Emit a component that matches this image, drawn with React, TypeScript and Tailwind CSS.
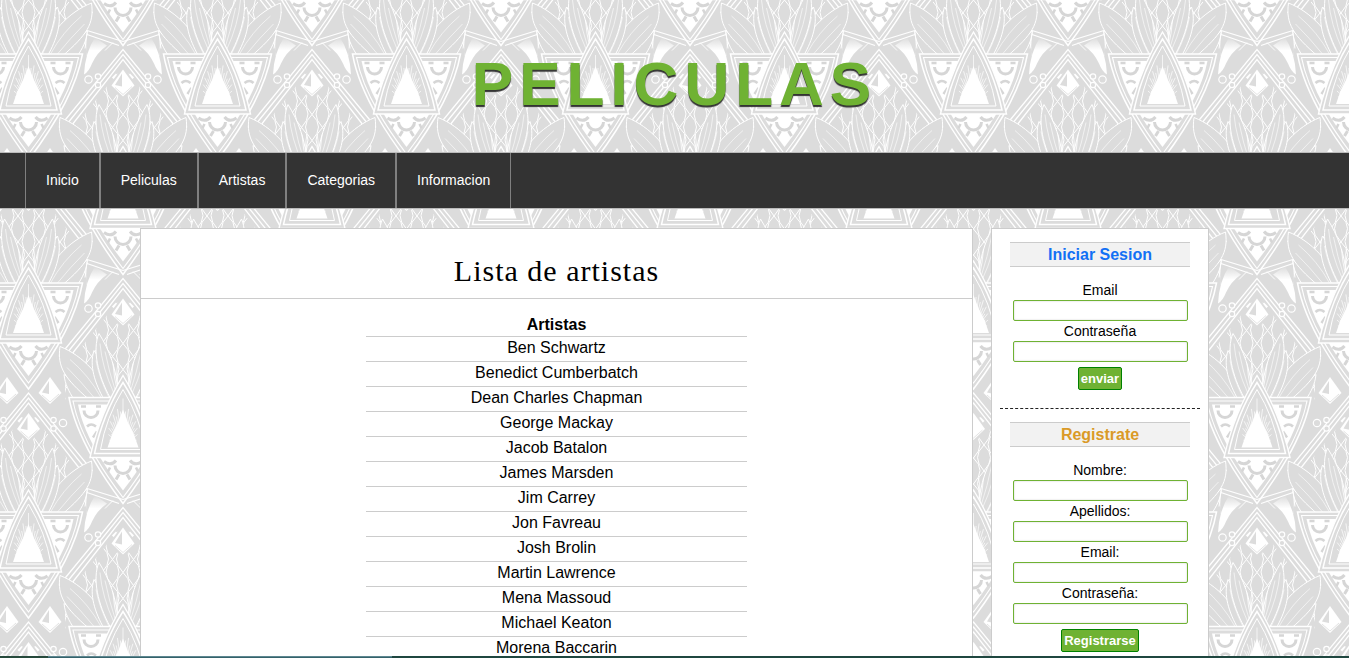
import type { ReactNode } from "react";

const SMALL_TRIANGLE = "M0 0Q23 38 33 82H-33Q-23 38 0 0Z";
const BIG_TRIANGLE = "M-54 22H54Q46 67 0 128Q-46 67 -54 22Z";

const scales = [-3, -2, -1, 0, 1, 2, 3].flatMap((i) =>
  [-2, -1, 0, 1, 2].flatMap((j) => [
    { x: i * 21, y: j * 26 - 18 },
    { x: i * 21 + 10.5, y: j * 26 - 5 },
  ])
);

const rays = Array.from({ length: 29 }, (_, i) => {
  const a = ((i - 14) * 6 * Math.PI) / 180;
  const off = Math.abs(i - 14);
  const len = off < 1 ? 48 : 42 - off * 1.8 - (i % 2) * 5;
  return { x: Math.sin(a) * len * 0.7, y: 71 - Math.cos(a) * len };
});

function Gem({ x, y }: { x: number; y: number }) {
  return (
    <g transform={`translate(${x} ${y})`}>
      <path d="M0 0L11.5 16L0 27L-11.5 16Z" fill="#fff" />
      <path d="M-1 4V17L-8 15.500Z" fill="#dcdcdc" />
      <path d="M-8 18L0 25L9 17" fill="none" stroke="#dcdcdc" strokeWidth="0.8" />
    </g>
  );
}

function Plumage() {
  return (
    <g fill="#dcdcdc" stroke="#fff" strokeWidth="1">
      <path d="M59 -1C58 9 54 16 49 24L30 24Q40 10 59 -1Z" />
      <path d="M63 -29C66 -8 58 3 34 24L14 24C20 2 40 -20 63 -29Z" />
      <path d="M53 -16Q34 0 22 22M56 -8Q42 6 29 22" fill="none" strokeWidth="0.6" />
      <path d="M29 -25C34 -10 28 8 19 24L11 22C13 2 20 -12 29 -25Z" />
      <path d="M24 -42C31 -26 25 0 13 22L5 18C6 -6 14 -26 24 -42Z" />
      <path d="M23 -32Q21 -8 9 18M18 -24Q14 -4 8 14M27 -15Q24 2 14 22" fill="none" strokeWidth="0.6" />
      <path d="M5 -12Q8 0 4 14M10 -12Q9 2 6 14" fill="none" strokeWidth="0.8" />
    </g>
  );
}

function Beads() {
  return (
    <g fill="#dcdcdc" stroke="#fff" strokeWidth="1.2">
      <circle cx="34.500" cy="-67" r="3.700" />
      <circle cx="25" cy="-70" r="2.700" />
      <circle cx="25" cy="-61.500" r="2.700" />
    </g>
  );
}

function Fang() {
  return (
    <g>
      <path d="M0 -105L36 -116M4 -101L36 -112" stroke="#fff" strokeWidth="1.300" />
      <path d="M10 -104L18 -96" fill="none" stroke="#fff" strokeWidth="0.900" />
      <path d="M16 -101L28 -109Q38 -94 39 -72Q34 -75 31 -83Q26 -94 16 -101Z" fill="url(#fang)" />
      <path d="M36 -114Q37 -104 38 -98" fill="none" stroke="#fff" strokeWidth="1" />
    </g>
  );
}

function Mirrored({ children }: { children: ReactNode }) {
  return (
    <>
      {children}
      <g transform="scale(-1 1)">{children}</g>
    </>
  );
}

function Motif({ x, y, fangs = false }: { x: number; y: number; fangs?: boolean }) {
  return (
    <g transform={`translate(${x} ${y})`}>
      <path d="M-64 -19L0 -97L64 -19" fill="#dcdcdc" stroke="#fff" strokeWidth="1.300" />
      <path d="M-62 -15L0 -92L62 -15M-60 -10L0 -87L60 -10" fill="none" stroke="#fff" strokeWidth="1.300" />
      <g clipPath="url(#roof)" fill="none" stroke="#fff" strokeWidth="1">
        {scales.map((s) => (
          <path
            key={`${s.x},${s.y}`}
            d={`M${s.x} ${s.y - 14}Q${s.x + 13} ${s.y - 2} ${s.x} ${s.y + 12}Q${s.x - 13} ${s.y - 2} ${s.x} ${s.y - 14}`}
          />
        ))}
      </g>
      <Mirrored>
        <Plumage />
        <Beads />
        {fangs && <Fang />}
        <path d="M6 -72L10 -68" stroke="#fff" strokeWidth="3" />
      </Mirrored>
      <path d="M0 -80L14 -61L0 -46L-14 -61Z" fill="#dcdcdc" />
      <Gem x={0} y={-77} />
      {!fangs && (
        <>
          <Gem x={21.5} y={-113} />
          <Gem x={-21.5} y={-113} />
        </>
      )}

      <path d={BIG_TRIANGLE} fill="#dcdcdc" stroke="#fff" strokeWidth="1.500" />
      <path d="M-50 25.500H50Q42 67 0 122Q-42 67 -50 25.500Z" fill="none" stroke="#fff" strokeWidth="1.200" />
      <path d="M-45 29H45Q38 66 0 115Q-38 66 -45 29Z" fill="#fff" />
      <g fill="none" stroke="#d6d6d6" strokeWidth="3">
        <path d="M-8 90A8 8 0 0 0 8 90" />
        <Mirrored>
          <path d="M7 85Q12 91 19 86M4 99L7 104M25 35A7 7 0 0 0 39 35" />
          <path d="M22 31H27M37 31H42M27 51Q32 47 36 51M26 56L30 62M13 92L15 96" strokeWidth="2.500" />
        </Mirrored>
      </g>

      <path d={SMALL_TRIANGLE} fill="#dcdcdc" stroke="#fff" strokeWidth="1.400" />
      <path d="M0 7Q20 38 28.500 78H-28.500Q-20 38 0 7Z" fill="none" stroke="#fff" strokeWidth="1.500" />
      <path d="M0 14Q17 42 22.500 74H-22.500Q-17 42 0 14Z" fill="#dcdcdc" stroke="#fff" strokeWidth="1" />
      <path d="M0 34L5 47L11 59L15.500 72H-15.500L-11 59L-5 47Z" fill="#fff" />
      {rays.map((r, i) => (
        <path key={i} d={`M0 71L${r.x} ${r.y}`} stroke="#fff" strokeWidth="0.700" />
      ))}
    </g>
  );
}

function Wallpaper() {
  return (
    <svg className="absolute inset-0 -z-10 h-full w-full" aria-hidden="true">
      <defs>
        <clipPath id="roof">
          <path d="M0 -80L58 -8V24H-58V-8Z" />
        </clipPath>
        <linearGradient id="fang" x1="0" y1="0" x2="0" y2="1">
          <stop offset="0" stopColor="#fff" stopOpacity="0" />
          <stop offset="0.35" stopColor="#fff" />
        </linearGradient>
        <pattern id="deco" width="189" height="229" patternUnits="userSpaceOnUse">
          <rect width="189" height="229" fill="#dcdcdc" />
          <Motif x={28.5} y={32} />
          <Motif x={217.5} y={32} />
          <Motif x={123} y={-82.5} fangs />
          <Motif x={123} y={146.5} fangs />
          <Motif x={28.5} y={261} />
          <Motif x={217.5} y={261} />
        </pattern>
      </defs>
      <rect width="100%" height="100%" fill="url(#deco)" />
    </svg>
  );
}

const menu = ["Inicio", "Peliculas", "Artistas", "Categorias", "Informacion"];

const artists = [
  "Ben Schwartz",
  "Benedict Cumberbatch",
  "Dean Charles Chapman",
  "George Mackay",
  "Jacob Batalon",
  "James Marsden",
  "Jim Carrey",
  "Jon Favreau",
  "Josh Brolin",
  "Martin Lawrence",
  "Mena Massoud",
  "Michael Keaton",
  "Morena Baccarin",
];

function Field({ id, label, type = "text" }: { id: string; label: string; type?: string }) {
  return (
    <>
      <label htmlFor={id} className="block text-sm leading-5">
        {label}
      </label>
      <input
        id={id}
        type={type}
        className="block h-[21px] w-[175px] rounded-xs border border-[#6fb233] bg-white px-1 text-sm shadow-[inset_0_0_2px_#ccc]"
      />
    </>
  );
}

function FormBlock({
  title,
  tone,
  action,
  children,
}: {
  title: string;
  tone: string;
  action: string;
  children: ReactNode;
}) {
  return (
    <form className="mx-[10px] flex flex-col items-center" onSubmit={(e) => e.preventDefault()}>
      <h2
        className={`mb-[13px] w-full border-y border-[#ccc] bg-[#f2f2f2] text-center text-base leading-[23px] font-bold ${tone}`}
      >
        {title}
      </h2>
      {children}
      <button
        type="submit"
        className="mt-[5px] h-[23px] rounded-xs border border-[green] bg-[#6fb233] px-[2px] text-[13px] leading-5 font-bold text-white"
      >
        {action}
      </button>
    </form>
  );
}

export default function App() {
  return (
    <div className="relative isolate h-screen overflow-hidden font-['Liberation_Sans',Arial,sans-serif] text-black">
      <Wallpaper />

      <header className="flex h-[152px] items-center justify-center pt-4">
        <h1 className="text-[62px] leading-none font-bold tracking-[6px] text-[#6fb233] [text-shadow:0_2px_1px_#333]">
          PELICULAS
        </h1>
      </header>

      <nav className="border-y border-[#bbb] bg-[#333] pl-[25px]">
        <ul className="flex">
          {menu.map((item) => (
            <li key={item}>
              <a href="#" className="block border-x border-[#808080] px-5 text-sm leading-[55px] text-white">
                {item}
              </a>
            </li>
          ))}
        </ul>
      </nav>

      <div className="mx-auto mt-[19px] flex max-w-[1069px] gap-[18px]">
        <main className="min-h-[600px] flex-1 border border-[#ccc] bg-white">
          <h2 className="border-b border-[#ccc] pt-[23px] pb-[8px] text-center font-['Liberation_Serif','Times_New_Roman',serif] text-[30px] leading-[38px] tracking-[1px]">
            Lista de artistas
          </h2>
          <table className="mx-auto mt-[13px] w-[381px] border-collapse text-center text-base leading-[22px]">
            <thead>
              <tr className="border-b border-[#ccc]">
                <th className="px-0 pt-[2px] pb-0 font-bold">Artistas</th>
              </tr>
            </thead>
            <tbody>
              {artists.map((name) => (
                <tr key={name} className="border-b border-[#ccc]">
                  <td className="px-0 pt-0 pb-[2px]">{name}</td>
                </tr>
              ))}
            </tbody>
          </table>
        </main>

        <aside className="w-[218px] border border-[#ccc] bg-white px-2 pt-[13px]">
          <FormBlock title="Iniciar Sesion" tone="text-[#1370f5]" action="enviar">
            <Field id="login-email" label="Email" type="email" />
            <Field id="login-password" label="Contraseña" type="password" />
          </FormBlock>
          <hr className="mt-[18px] mb-[13px] border-t border-dashed border-[#222]" />
          <FormBlock title="Registrate" tone="text-[#da9a27]" action="Registrarse">
            <Field id="name" label="Nombre:" />
            <Field id="surname" label="Apellidos:" />
            <Field id="email" label="Email:" type="email" />
            <Field id="password" label="Contraseña:" type="password" />
          </FormBlock>
        </aside>
      </div>

      <div className="absolute inset-x-0 bottom-0 flex h-[2px] bg-[#1f4740]">
        <div className="w-12 bg-[#264a3c]" />
        <div className="w-[344px] border-t border-[#5d8790] bg-[#35626b]" />
      </div>
    </div>
  );
}
